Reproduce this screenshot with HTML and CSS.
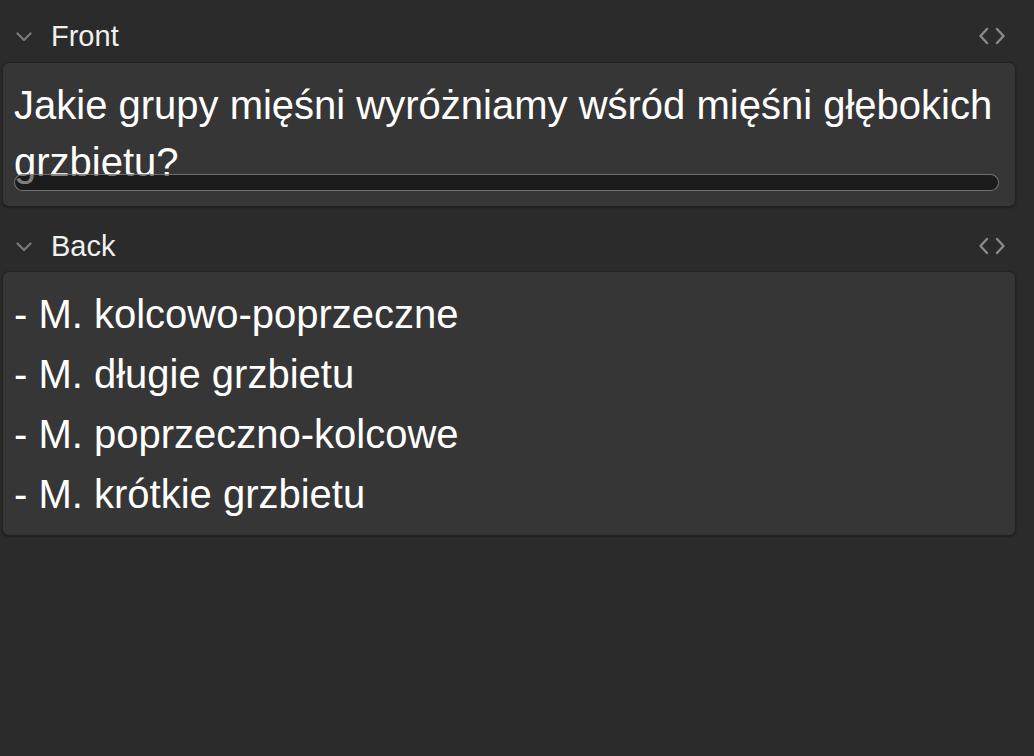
FILE: index.html
```html
<!DOCTYPE html>
<html lang="pl">
<head>
    <meta charset="UTF-8">
    <meta name="viewport" content="width=device-width, initial-scale=1.0">
    <title>Editor</title>
    <link rel="stylesheet" href="styles.css">
</head>
<body>
    <div class="fields">
        <div class="field-head">
            <svg class="chevron" width="16" height="10" viewBox="0 0 16 10"><path d="M1.5 1.5 L8 8 L14.5 1.5" fill="none" stroke="#7a7a7a" stroke-width="2.2" stroke-linecap="round" stroke-linejoin="round"/></svg>
            <span class="field-name">Front</span>
            <svg class="code-icon" width="28" height="18" viewBox="0 0 28 18"><path d="M9 2 L2.5 9 L9 16 M19 2 L25.5 9 L19 16" fill="none" stroke="#8a8a8a" stroke-width="2.4" stroke-linecap="round" stroke-linejoin="round"/></svg>
        </div>
        <div class="field-box front">
            <div class="field-text">Jakie grupy mięśni wyróżniamy wśród mięśni głębokich grzbietu?</div>
            <div class="hscroll"></div>
        </div>

        <div class="field-head">
            <svg class="chevron" width="16" height="10" viewBox="0 0 16 10"><path d="M1.5 1.5 L8 8 L14.5 1.5" fill="none" stroke="#7a7a7a" stroke-width="2.2" stroke-linecap="round" stroke-linejoin="round"/></svg>
            <span class="field-name">Back</span>
            <svg class="code-icon" width="28" height="18" viewBox="0 0 28 18"><path d="M9 2 L2.5 9 L9 16 M19 2 L25.5 9 L19 16" fill="none" stroke="#8a8a8a" stroke-width="2.4" stroke-linecap="round" stroke-linejoin="round"/></svg>
        </div>
        <div class="field-box">
            <div class="field-text">
                <div>- M. kolcowo-poprzeczne</div>
                <div>- M. długie grzbietu</div>
                <div>- M. poprzeczno-kolcowe</div>
                <div>- M. krótkie grzbietu</div>
            </div>
        </div>
    </div>
</body>
</html>
```

FILE: styles.css
```css
html, body {
    margin: 0;
    padding: 0;
    background: #2b2b2b;
}

body {
    font-family: "Liberation Sans", Arial, sans-serif;
    color: #f2f2f2;
    width: 1034px;
    height: 756px;
    overflow: hidden;
}

.fields {
    padding: 0 18px 0 2px;
}

.field-head {
    display: flex;
    align-items: center;
    height: 62px;
    padding-top: 10px;
    box-sizing: border-box;
}

.field-box + .field-head {
    height: 64px;
    padding-top: 14px;
}

.chevron {
    margin-left: 14px;
    margin-top: 2px;
}

.field-name {
    margin-left: 19px;
    font-size: 29px;
    color: #f0f0f0;
}

.code-icon {
    margin-left: auto;
    margin-right: 10px;
}

.field-box {
    position: relative;
    background: #363636;
    border: 1px solid #222;
    border-radius: 7px;
    box-shadow: 0 1px 2px rgba(0, 0, 0, 0.35);
    padding: 12px 16px 11px 11px;
}

.field-box.front {
    padding-top: 14px;
    padding-bottom: 15px;
}

.field-box.front .field-text {
    line-height: 57px;
}

.field-text {
    font-size: 40px;
    line-height: 60px;
    color: #ffffff;
}

.hscroll {
    position: absolute;
    left: 11px;
    right: 16px;
    bottom: 15px;
    height: 15px;
    border-radius: 9px;
    background: rgba(0, 0, 0, 0.5);
    border: 1px solid rgba(140, 140, 140, 0.75);
}
```
